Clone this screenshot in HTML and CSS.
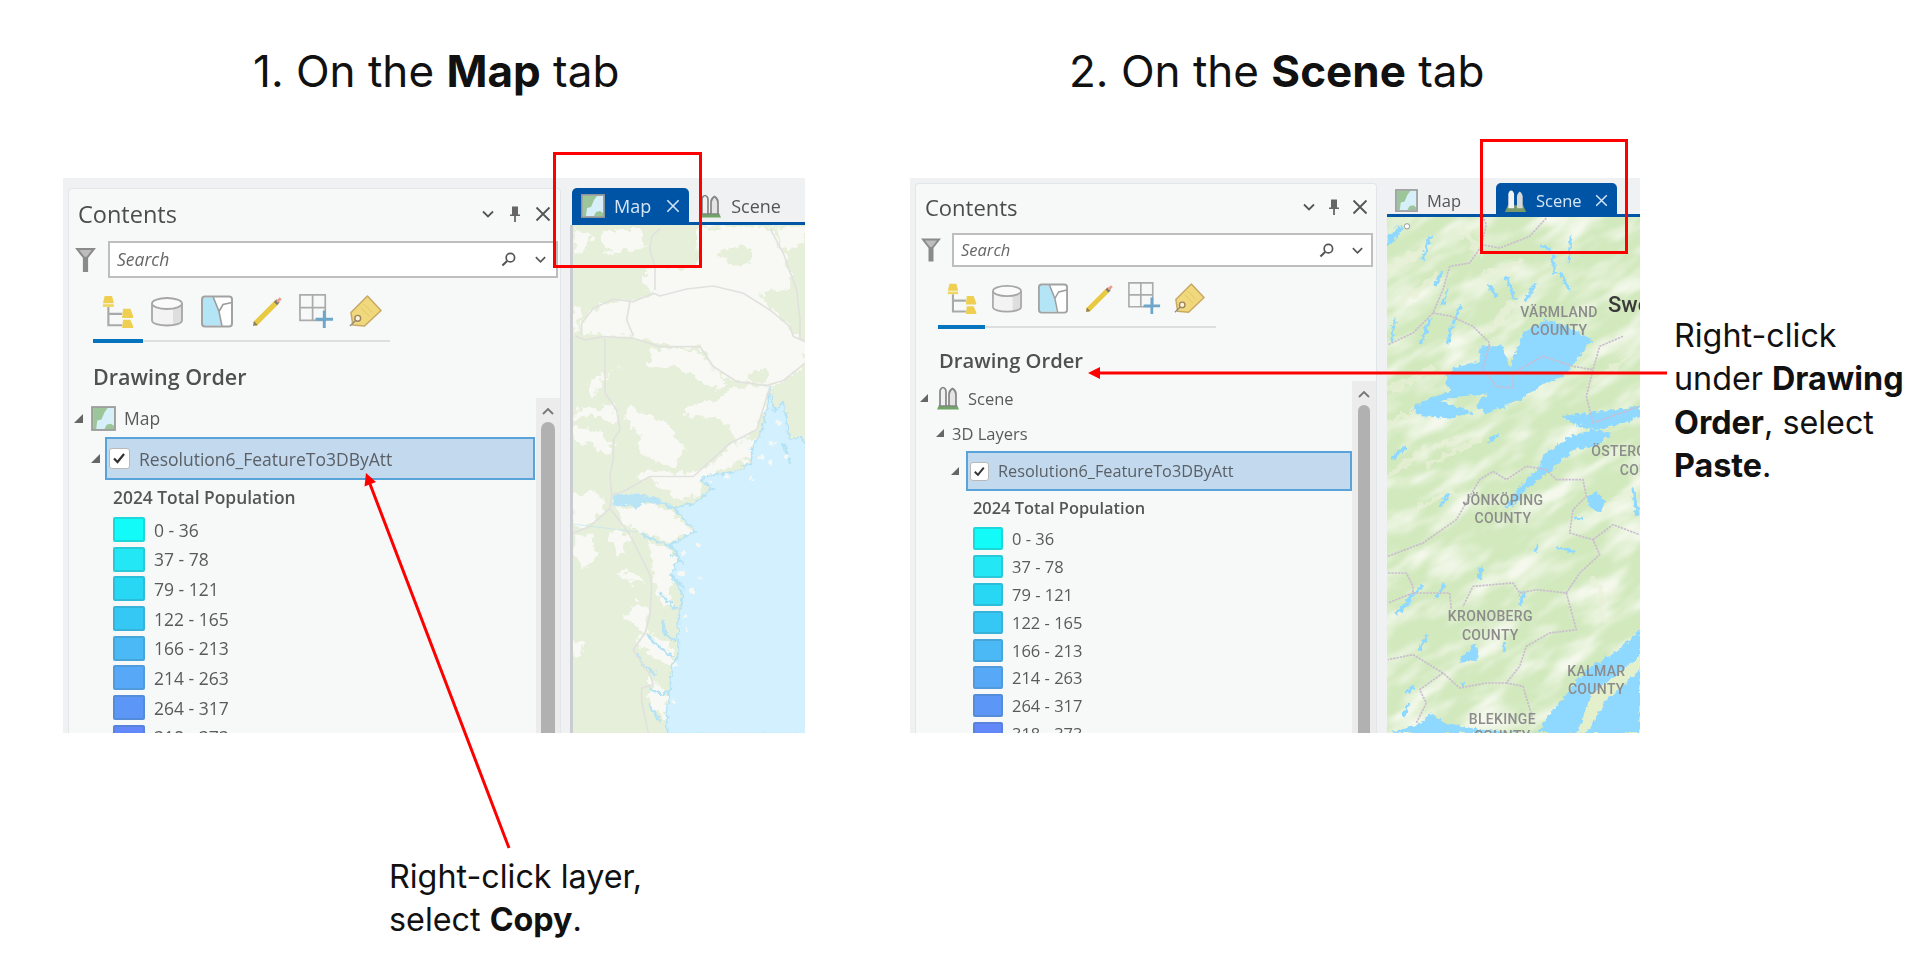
FILE: index.html
```html
<!DOCTYPE html>
<html lang="en">
<head>
<meta charset="utf-8">
<title>Copy a layer from a map to a scene</title>
<link rel="stylesheet" href="styles.css">
</head>
<body>
<svg class="sprite" aria-hidden="true">
  <defs>
    <filter id="rough" x="-5%" y="-5%" width="110%" height="110%">
      <feTurbulence type="fractalNoise" baseFrequency=".04" numOctaves="3" seed="4"/>
      <feDisplacementMap in="SourceGraphic" scale="42" xChannelSelector="R" yChannelSelector="G"/>
    </filter>
    <filter id="fine" x="-5%" y="-5%" width="110%" height="110%">
      <feTurbulence type="fractalNoise" baseFrequency=".07" numOctaves="3" seed="9"/>
      <feDisplacementMap in="SourceGraphic" scale="20" xChannelSelector="R" yChannelSelector="G"/>
    </filter>
    <filter id="mottle" x="0" y="0" width="100%" height="100%">
      <feTurbulence type="fractalNoise" baseFrequency=".006 .017" numOctaves="3" seed="7"/>
      <feColorMatrix type="matrix" values="0 0 0 0 .91  0 0 0 0 .945  0 0 0 0 .845  3 0 0 0 -1.300"/>
      <feGaussianBlur stdDeviation="3"/>
    </filter>
    <symbol id="i-chevron" viewBox="0 0 14 14"><path d="M2 4.500 7 9.500 12 4.500" fill="none" stroke="#555" stroke-width="1.800"/></symbol>
    <symbol id="i-pin" viewBox="0 0 14 18"><path d="M4 1.500h6v8h2v1.500H2V9.500h2z" fill="#666"/><path d="M7 11v6" stroke="#666" stroke-width="1.800"/></symbol>
    <symbol id="i-close" viewBox="0 0 16 16"><path d="M1.500 1.500 14.500 14.500M14.500 1.500 1.500 14.500" fill="none" stroke="currentColor" stroke-width="1.800"/></symbol>
    <symbol id="i-filter" viewBox="0 0 22 26"><path d="M1 1.500h20L13.500 11v13.500h-5V11z" fill="#8a8a8a"/><path d="M5 3.500h12L12 10h-2z" fill="#bdbdbd"/></symbol>
    <symbol id="i-search" viewBox="0 0 16 16"><circle cx="10" cy="6" r="4.500" fill="none" stroke="#555" stroke-width="1.800"/><path d="M6.500 9.500 1.500 14.500" stroke="#555" stroke-width="2.200"/></symbol>
    <symbol id="i-order" viewBox="0 0 35 36">
      <path d="M7 13v20h15M7 20.500h15" fill="none" stroke="#a9a9a9" stroke-width="2.400"/>
      <path d="M3 1h8l2 8H1z" fill="#efcf52"/><path d="M1 10h12v3H1z" fill="#efd662"/>
      <path d="M23 15h8l3 8v2H22z" fill="#efcf52"/><path d="M23 27h8l3 7v2H22z" fill="#efcf52"/>
    </symbol>
    <symbol id="i-source" viewBox="0 0 32 30">
      <path d="M1 7v17c0 3 7 5 15 5s15-2 15-5V7z" fill="#f3f3f3"/><path d="M22 11h9v13c0 2-4 4-9 4.500z" fill="#dedede"/>
      <path d="M1 7v17c0 3 7 5 15 5s15-2 15-5V7" fill="none" stroke="#a6a6a6" stroke-width="1.800"/>
      <ellipse cx="16" cy="7" rx="15" ry="5.500" fill="#fafafa" stroke="#a6a6a6" stroke-width="1.800"/>
    </symbol>
    <symbol id="i-selection" viewBox="0 0 32 32">
      <rect x="1" y="1" width="30" height="30" rx="3" fill="#fff"/>
      <path d="M2 2h10l5 12 3 16H2z" fill="#b3e5f7"/>
      <path d="M12 1l6 15 3 15M18 16l4-7 9-2" fill="none" stroke="#9c9c9c" stroke-width="1.600"/>
      <rect x="1" y="1" width="30" height="30" rx="3" fill="none" stroke="#a2a2a2" stroke-width="2"/>
    </symbol>
    <symbol id="i-pencil" viewBox="0 0 30 30">
      <path d="M2.500 27.500 24 6" stroke="#e8c942" stroke-width="5"/>
      <path d="M1 29 2 24.500 5.500 28z" fill="#8a7d5a"/>
      <path d="M22.500 4.500 25.500 7.500" stroke="#777" stroke-width="3.500"/>
      <path d="M25 3 27 5" stroke="#ee9e8e" stroke-width="5"/>
    </symbol>
    <symbol id="i-add" viewBox="0 0 36 36">
      <path d="M1 1h26v26H1zM14 1v26M1 14h26" fill="none" stroke="#ababab" stroke-width="1.800"/>
      <path d="M26 17v18M17 26h18" fill="none" stroke="#6ea6ca" stroke-width="3"/>
    </symbol>
    <symbol id="i-label" viewBox="0 0 34 34">
      <path d="M19 1 33 16 16 32 4 31 2 18z" fill="#f0d87c" stroke="#c9a864" stroke-width="1.600" stroke-linejoin="round"/>
      <path d="M15 9l9 9M12 13l9 9" stroke="#e2c566" stroke-width="1"/>
      <circle cx="9" cy="24" r="3" fill="#f9f3df" stroke="#a0825c" stroke-width="1.500"/>
      <path d="M7 26 1 32" stroke="#8d8d80" stroke-width="1.500"/>
    </symbol>
    <symbol id="i-map" viewBox="0 0 24 24">
      <rect x="1" y="1" width="22" height="22" fill="#d7eff8"/>
      <path d="M2 2h14l-3 4-3 7-4 1-1 8H2z" fill="#9cc59a"/>
      <path d="M13 22l2-4 4-1 3 2v3z" fill="#9cc59a"/>
      <rect x="1" y="1" width="22" height="22" fill="none" stroke="#9b9e9b" stroke-width="1.800"/>
    </symbol>
    <symbol id="i-scene" viewBox="0 0 24 24">
      <path d="M1 23.500 3 19h18l2 4.500z" fill="#6fa565"/>
      <path d="M4 20V5.500C4 3.500 5.500 1.500 7 1.500S10 3.500 10 5.500V20z" fill="#f0f0f0" stroke="#858585" stroke-width="1.700"/>
      <path d="M13 20V8C13 6 15 3.500 16.500 2.500 18 3.500 20 6 20 8V20z" fill="#e4e4e4" stroke="#858585" stroke-width="1.700"/>
    </symbol>
    <symbol id="i-scene-active" viewBox="0 0 24 24">
      <path d="M1 24 4 17h16l3 7z" fill="#7a9a6c"/>
      <path d="M4.500 20V5.500C4.500 3.500 6 1.500 7.500 1.500S10.500 3.500 10.500 5.500V20z" fill="#f4f4f4"/>
      <path d="M13.500 20V8C13.500 6 15 3.500 16.500 2.500 18 3.500 19.500 6 19.500 8V20z" fill="#d8d8d8"/>
    </symbol>
  </defs>
</svg>

<main class="slide">
  <h2 class="title title-map">1. On the <b>Map</b> tab</h2>
  <h2 class="title title-scene">2. On the <b>Scene</b> tab</h2>

  <section class="shot shot-map">
    <div class="panel">
      <header class="panel-head">
        <h3 class="panel-title">Contents</h3>
        <div class="panel-tools">
          <svg class="tool tool-chevron"><use href="#i-chevron"/></svg>
          <svg class="tool tool-pin"><use href="#i-pin"/></svg>
          <svg class="tool tool-close"><use href="#i-close"/></svg>
        </div>
      </header>
      <div class="search-row">
        <svg class="filter"><use href="#i-filter"/></svg>
        <div class="search">
          <span class="search-text">Search</span>
          <svg class="search-icon"><use href="#i-search"/></svg>
          <svg class="search-chevron"><use href="#i-chevron"/></svg>
        </div>
      </div>
      <div class="views">
        <svg class="view-icon vi-order"><use href="#i-order"/></svg>
        <svg class="view-icon vi-source"><use href="#i-source"/></svg>
        <svg class="view-icon vi-selection"><use href="#i-selection"/></svg>
        <svg class="view-icon vi-pencil"><use href="#i-pencil"/></svg>
        <svg class="view-icon vi-add"><use href="#i-add"/></svg>
        <svg class="view-icon vi-label"><use href="#i-label"/></svg>
      </div>
      <div class="views-rule"><span class="views-rule-on"></span></div>
      <h4 class="order-title">Drawing Order</h4>
      <div class="tree">
        <div class="tree-body">
          <div class="node node-root">
            <span class="twist"></span>
            <svg class="node-icon"><use href="#i-map"/></svg>
            <span>Map</span>
          </div>
          <div class="layer">
            <span class="twist"></span>
            <div class="layer-row">
              <span class="check"><svg viewBox="0 0 14 14"><path d="M2 7.500 5.500 11 12 3" fill="none" stroke="#333" stroke-width="2.200"/></svg></span>
              <span class="layer-name">Resolution6_FeatureTo3DByAtt</span>
            </div>
          </div>
          <div class="legend-title">2024 Total Population</div>
          <ul class="legend">
            <li><i class="swatch c1"></i>0 - 36</li>
            <li><i class="swatch c2"></i>37 - 78</li>
            <li><i class="swatch c3"></i>79 - 121</li>
            <li><i class="swatch c4"></i>122 - 165</li>
            <li><i class="swatch c5"></i>166 - 213</li>
            <li><i class="swatch c6"></i>214 - 263</li>
            <li><i class="swatch c7"></i>264 - 317</li>
            <li><i class="swatch c8"></i>318 - 373</li>
          </ul>
        </div>
        <div class="scroll">
          <svg class="scroll-up" viewBox="0 0 14 10"><path d="M2 8 7 3l5 5" fill="none" stroke="#777" stroke-width="1.800"/></svg>
          <div class="scroll-thumb"></div>
        </div>
      </div>
    </div>
    <div class="view">
      <div class="tabbar">
        <div class="tab tab-on">
          <svg class="tab-icon"><use href="#i-map"/></svg>
          <span>Map</span>
          <svg class="tab-close"><use href="#i-close"/></svg>
        </div>
        <div class="tab tab-off">
          <svg class="tab-icon"><use href="#i-scene"/></svg>
          <span>Scene</span>
        </div>
      </div>
      <div class="map">
        <svg class="map-art" viewBox="9 45 696 1525" preserveAspectRatio="none">
          <rect x="0" y="0" width="720" height="1600" fill="#e6efd9"/>
          <g fill="#f8f9f5" filter="url(#rough)">
            <polygon points="170,270 250,250 350,235 430,225 520,250 600,300 665,355 690,385 705,395 705,460 640,510 600,525 500,515 440,490 390,410 300,410 190,380 165,330"/>
            <polygon points="225,170 385,175 380,50 600,50 650,150 660,240 575,245 620,300 660,350 520,250 430,225 260,250 225,240"/>
            <polygon points="35,370 40,330 90,285 170,270 165,330 190,380 100,380"/>
            <polygon points="170,590 230,610 300,650 350,720 300,770 210,730 210,680 170,630"/>
            <polygon points="340,590 440,570 500,530 600,530 560,660 500,700 480,640 420,620 350,620"/>
            <polygon points="10,650 80,660 130,700 120,740 60,700 10,690"/>
            <polygon points="200,780 350,790 400,780 500,700 560,680 540,740 400,810 200,810"/>
            <polygon points="50,520 120,490 160,470 110,500 60,570"/>
            <polygon points="240,420 380,420 420,470 470,520 440,540 330,470 240,470"/>
            <polygon points="90,60 210,60 220,110 150,130 100,120"/>
            <polygon points="10,60 60,60 70,85 30,125 10,130"/>
            <polygon points="10,300 30,280 25,360 10,370"/>
            <polygon points="10,600 130,590 140,640 60,620 10,630"/>
            <polygon points="140,895 240,880 300,905 370,965 300,1000 220,965 160,945"/>
            <polygon points="10,855 80,845 110,885 60,945 10,955"/>
            <polygon points="10,975 60,975 80,1035 50,1075 10,1035"/>
            <polygon points="110,965 180,975 150,1045"/>
            <polygon points="140,1090 190,1080 220,1120 180,1120"/>
            <polygon points="165,1225 200,1170 235,1195 230,1265 200,1255"/>
            <polygon points="10,1290 50,1305 30,1335 10,1345"/>
            <polygon points="190,1285 230,1325 270,1355 310,1365 300,1300 240,1270"/>
            <polygon points="225,800 300,800 395,795 395,850 340,870 270,830"/>
            <polygon points="240,1000 300,1020 330,1100 290,1150 320,1190 270,1180 250,1100"/>
            <polygon points="240,1400 290,1450 290,1530 240,1500"/>
            <polygon points="640,120 705,100 705,50 620,50"/>
          </g>
          <g fill="#e6efd9" filter="url(#rough)">
            <polygon points="450,120 540,110 540,160 470,160"/>
            <polygon points="570,255 640,280 630,320 590,290"/>
            <polygon points="535,485 585,480 590,515 545,520"/>
            <polygon points="300,60 360,60 350,140 310,150"/>
            <polygon points="650,160 705,170 705,250 660,240"/>
          </g>
          <path filter="url(#fine)" fill="#d3f0fe" stroke="#b5e2f5" stroke-width="5" d="M600 530 590 600 575 660 545 715 545 760 480 790 400 800 395 815 430 835 370 880 310 895 375 965 300 1005 330 1045 300 1095 340 1155 330 1195 325 1235 325 1335 305 1365 300 1445 290 1495 290 1575H720V715L690 680 660 690 640 580 612 600Z"/>
          <g fill="#b9e4f6" filter="url(#fine)">
            <polygon points="130,855 200,850 260,865 320,895 330,910 270,880 210,885 200,900 180,885 130,890"/>
            <polygon points="205,965 250,985 300,1005 320,1025 270,1000 230,985"/>
          </g>
          <g fill="none" stroke="#b5e2f5" stroke-width="8" filter="url(#fine)">
            <path d="M265 1145 320 1200M280 1235 285 1275 320 1295M230 1275 270 1315 310 1340M200 1330 215 1365 260 1395M240 1435 270 1455 300 1445M235 1485 270 1535M300 1035 340 1060M305 1095 345 1140M640 700 660 760"/>
          </g>
          <g fill="#f6f8f4" filter="url(#fine)">
            <circle cx="315" cy="1045" r="9"/><circle cx="340" cy="1030" r="8"/><circle cx="335" cy="1090" r="10"/><circle cx="365" cy="1145" r="9"/><circle cx="385" cy="1005" r="6"/><circle cx="390" cy="1105" r="5"/><circle cx="310" cy="1475" r="5"/><circle cx="545" cy="805" r="7"/><circle cx="600" cy="755" r="6"/><circle cx="318" cy="1365" r="7"/><circle cx="625" cy="640" r="8"/><circle cx="605" cy="700" r="9"/><circle cx="650" cy="740" r="7"/><circle cx="575" cy="745" r="6"/><circle cx="470" cy="800" r="7"/><circle cx="420" cy="815" r="5"/><circle cx="345" cy="1220" r="4"/><circle cx="350" cy="1260" r="5"/>
          </g>
          <path fill="none" stroke="#bfe6f6" stroke-width="2" d="M10 943 205 967"/>
          <g fill="none" stroke="#e1e2df" stroke-width="5" stroke-linejoin="round">
            <path d="M600 55 640 130 680 240 690 330 690 385 705 395"/>
            <path d="M270 55 245 80 240 120 255 170 255 240"/>
            <path d="M35 375 35 340 70 295 130 268 190 275 250 250 270 258 350 237 430 228 520 250 600 300 660 350 670 380 705 395"/>
            <path d="M180 275 170 330 190 378"/>
            <path d="M15 378 45 390 100 380 190 385 270 410 390 410 430 470 500 515 590 527 640 512 705 460"/>
            <path d="M105 385 105 550 140 600 150 660 130 690 130 750 120 795 125 855 120 895 180 975 240 1095 245 1125 240 1215 225 1270 190 1320 240 1395 250 1425 215 1435 215 1475 235 1570"/>
            <path d="M120 895 60 950 10 970"/>
            <path d="M125 855 160 845 240 800 370 800 480 700 560 660 600 530"/>
          </g>
        </svg>
      </div>
    </div>
  </section>

  <section class="shot shot-scene">
    <div class="panel">
      <header class="panel-head">
        <h3 class="panel-title">Contents</h3>
        <div class="panel-tools">
          <svg class="tool tool-chevron"><use href="#i-chevron"/></svg>
          <svg class="tool tool-pin"><use href="#i-pin"/></svg>
          <svg class="tool tool-close"><use href="#i-close"/></svg>
        </div>
      </header>
      <div class="search-row">
        <svg class="filter"><use href="#i-filter"/></svg>
        <div class="search">
          <span class="search-text">Search</span>
          <svg class="search-icon"><use href="#i-search"/></svg>
          <svg class="search-chevron"><use href="#i-chevron"/></svg>
        </div>
      </div>
      <div class="views">
        <svg class="view-icon vi-order"><use href="#i-order"/></svg>
        <svg class="view-icon vi-source"><use href="#i-source"/></svg>
        <svg class="view-icon vi-selection"><use href="#i-selection"/></svg>
        <svg class="view-icon vi-pencil"><use href="#i-pencil"/></svg>
        <svg class="view-icon vi-add"><use href="#i-add"/></svg>
        <svg class="view-icon vi-label"><use href="#i-label"/></svg>
      </div>
      <div class="views-rule"><span class="views-rule-on"></span></div>
      <h4 class="order-title">Drawing Order</h4>
      <div class="tree">
        <div class="tree-body">
          <div class="node node-root">
            <span class="twist"></span>
            <svg class="node-icon"><use href="#i-scene"/></svg>
            <span>Scene</span>
          </div>
          <div class="node node-group">
            <span class="twist"></span>
            <span>3D Layers</span>
          </div>
          <div class="layer">
            <span class="twist"></span>
            <div class="layer-row">
              <span class="check"><svg viewBox="0 0 14 14"><path d="M2 7.500 5.500 11 12 3" fill="none" stroke="#333" stroke-width="2.200"/></svg></span>
              <span class="layer-name">Resolution6_FeatureTo3DByAtt</span>
            </div>
          </div>
          <div class="legend-title">2024 Total Population</div>
          <ul class="legend">
            <li><i class="swatch c1"></i>0 - 36</li>
            <li><i class="swatch c2"></i>37 - 78</li>
            <li><i class="swatch c3"></i>79 - 121</li>
            <li><i class="swatch c4"></i>122 - 165</li>
            <li><i class="swatch c5"></i>166 - 213</li>
            <li><i class="swatch c6"></i>214 - 263</li>
            <li><i class="swatch c7"></i>264 - 317</li>
            <li><i class="swatch c8"></i>318 - 373</li>
          </ul>
        </div>
        <div class="scroll">
          <svg class="scroll-up" viewBox="0 0 14 10"><path d="M2 8 7 3l5 5" fill="none" stroke="#777" stroke-width="1.800"/></svg>
          <div class="scroll-thumb"></div>
        </div>
      </div>
    </div>
    <div class="view">
      <div class="tabbar">
        <div class="tab tab-off">
          <svg class="tab-icon"><use href="#i-map"/></svg>
          <span>Map</span>
        </div>
        <div class="tab tab-on">
          <svg class="tab-icon"><use href="#i-scene-active"/></svg>
          <span>Scene</span>
          <svg class="tab-close"><use href="#i-close"/></svg>
        </div>
      </div>
      <div class="map">
        <svg class="map-art" viewBox="22 262 759 1548" preserveAspectRatio="none">
          <rect x="0" y="200" width="800" height="1650" fill="#d2e9be"/>
          <rect x="-500" y="-100" width="1900" height="2500" filter="url(#mottle)" transform="rotate(-32 400 1000)"/>
          <g fill="none" stroke="#e9f1d8" stroke-linecap="round" stroke-opacity=".7" filter="url(#rough)">
            <path stroke-width="26" d="M30 420 150 350M60 520 170 440M30 780 150 720M240 300 300 360M320 440 420 400M400 520 330 600"/>
            <path stroke-width="18" d="M150 1000 300 930M30 1040 130 960M220 1090 100 1140M170 950 250 920M30 880 120 840"/>
            <path stroke-width="14" d="M640 1340 680 1420M680 1480 650 1400M640 760 770 660M700 1110 760 1090"/>
          </g>
          <g fill="#8fd8ff" filter="url(#fine)">
            <polygon points="300,650 370,650 390,715 430,610 500,570 560,590 635,630 600,680 550,740 480,770 440,800 380,830 310,850 290,820 330,790 250,800 180,815 230,830 280,850 200,865 130,860 95,838 140,810 210,785 195,750 225,715 300,695"/>
            <polygon points="640,900 700,910 650,950 580,960 520,1020 450,1070 400,1130 375,1135 420,1070 470,1020 500,970 570,920"/>
            <polygon points="540,860 700,840 781,830 781,865 660,900 600,890"/>
            <polygon points="22,320 60,285 72,300 40,335 22,350"/>
            <polygon points="620,1100 650,1085 680,1115 660,1150 630,1130"/>
            <polygon points="240,1590 290,1540 295,1590 240,1600"/>
            <polygon points="50,1450 90,1420 110,1400 70,1445"/>
            <polygon points="30,1810 130,1780 150,1750 200,1780 300,1800 470,1810 520,1740 620,1620 720,1560 781,1500 781,1810"/>
          </g>
          <path fill="#e4efcc" d="M590 1810 640 1690 781 1580V1620L680 1710 620 1810Z" filter="url(#fine)"/>
          <g fill="none" stroke="#8fd8ff" stroke-linecap="round" stroke-width="9" filter="url(#fine)">
            <path d="M150 320 130 390M380 440 405 510M440 510 465 465M540 430 570 480M575 320 565 400M520 380 525 430M330 470 350 500M490 350 510 360M185 430 165 470M240 530 225 580M205 480 190 520M150 570 125 640M215 590 205 640M45 570 35 630"/>
            <path d="M185 1125 205 1095M330 935 355 915M40 985 75 955M590 1165 605 1167M475 1245 470 1265M535 1255 580 1265M305 1315 300 1345M195 1365 170 1400M130 1365 50 1450M140 1520 120 1560M375 1540 375 1560M250 1660 252 1662M100 1670 80 1690M85 1730 70 1760M430 1390 425 1420M760 1080 775 1160"/>
          </g>
          <g fill="none" stroke="#cabdcf" stroke-width="5" stroke-dasharray="7 3" stroke-linejoin="round">
            <path d="M500 265 450 320 360 355 305 345 320 285 310 262"/>
            <path d="M305 350 270 400 210 410 190 480 160 550 100 610 25 645"/>
            <path d="M160 550 215 560 280 590 330 640 310 720 350 770 400 775 400 730 490 680 580 710 640 720 620 800 640 880 780 830"/>
            <path d="M730 620 660 650 640 720"/>
            <path d="M25 1280 130 1240 230 1170 300 1050 340 1025 380 1050 440 1010 500 1020 530 1050 610 1050 620 1100 580 1140 570 1210 640 1230 660 1275 600 1330 560 1390 470 1380 420 1390 400 1360 280 1370 250 1430"/>
            <path d="M560 1390 590 1500 510 1510 440 1550 420 1610 380 1660 320 1660 240 1675 190 1630 100 1575 25 1590"/>
            <path d="M640 1230 700 1185 780 1215"/>
            <path d="M380 1660 430 1670 460 1770"/>
            <path d="M190 1630 120 1680 140 1720 110 1780"/>
            <path d="M25 1330 80 1330 100 1370 100 1390 25 1420M100 1390 210 1390 215 1440"/>
          </g>
          <circle cx="82" cy="290" r="8" fill="#fff" stroke="#999" stroke-width="3"/>
          <g class="map-labels">
            <text x="538" y="562">VÄRMLAND</text><text x="538" y="617">COUNTY</text>
            <text x="370" y="1125">JÖNKÖPING</text><text x="370" y="1180">COUNTY</text>
            <text x="332" y="1475">KRONOBERG</text><text x="332" y="1530">COUNTY</text>
            <text x="650" y="1638">KALMAR</text><text x="650" y="1693">COUNTY</text>
            <text x="368" y="1782">BLEKINGE</text><text x="368" y="1835">COUNTY</text>
            <text class="map-label-start" x="635" y="980">ÖSTERGÖTLAND</text><text class="map-label-start" x="720" y="1035">COUNTY</text>
          </g>
          <text class="map-country" x="685" y="548">Sweden</text>
        </svg>
      </div>
    </div>
  </section>

  <p class="note note-copy">Right-click layer,<br>select <b>Copy</b>.</p>
  <p class="note note-paste">Right-click<br>under <b>Drawing</b><br><b>Order</b>, select<br><b>Paste</b>.</p>

  <svg class="callouts" viewBox="0 0 1920 961" aria-hidden="true">
    <rect x="554.500" y="153.500" width="146" height="113" />
    <rect x="1481.500" y="140.500" width="145" height="112" />
    <path d="M509 848 370 484M1667 373H1098"/>
    <polygon points="366,473 376,482 364.500,486.500"/>
    <polygon points="1088,373 1100,367 1100,379"/>
  </svg>
</main>
</body>
</html>
```

FILE: styles.css
```css
* { box-sizing: border-box; }
html, body { margin: 0; padding: 0; background: #fff; }
body { font-family: Inter, "Liberation Sans", sans-serif; color: #111; }
.sprite { position: absolute; width: 0; height: 0; overflow: hidden; }

/* The slide is a free canvas: figures and captions sit where the author dropped them. */
.slide { position: relative; width: 1920px; height: 961px; overflow: hidden; background: #fff; }

.title { position: absolute; top: 44px; margin: 0; font-size: 44px; line-height: 54px; font-weight: 400; color: #111; white-space: nowrap; }
.title b { font-weight: 700; }
.title-map { left: 253px; }
.title-scene { left: 1069px; }

.note { position: absolute; margin: 0; font-size: 32.300px; line-height: 43.400px; color: #111; white-space: nowrap; }
.note b { font-weight: 700; }
.note-copy { left: 389px; top: 855px; }
.note-paste { left: 1674px; top: 314px; }

.callouts { position: absolute; inset: 0; width: 1920px; height: 961px; pointer-events: none; }
.callouts rect { fill: none; stroke: #f00; stroke-width: 3; }
.callouts path { fill: none; stroke: #f00; stroke-width: 3; }
.callouts polygon { fill: #f00; }

/* Screenshot component; each instance sets its own metrics */
.shot {
  position: absolute; display: flex; overflow: hidden; background: #eff1f3; color: #5a5a5a;
  font-family: "Open Sans", "Noto Sans", sans-serif; filter: blur(.55px);
}
.shot-map {
  left: 63px; top: 178px; width: 742px; height: 555px;
  --panel-x: 5px; --panel-y: 10px; --panel-w: 493px;
  --head-h: 52px; --head-pad: 2px; --title-fs: 23.500px; --text-fs: 17.500px; --name-fs: 17.500px; --bold-fs: 17.400px; --order-fs: 21.500px;
  --tool-right: 9px; --tool-gap: 13px;
  --search-h: 37px; --filter-x: 5px; --filter-w: 23px; --filter-h: 28px; --search-x: 11px; --search-r: 2px; --search-gap: 18px; --search-pad: 9px;
  --views-x: 32px; --view-gap: 16px; --views-top: 16px; --views-h: 35px; --rule-x: 24px; --rule-w: 297px; --rule-on: 50px; --rule-gap: 11px;
  --order-x: 24px; --order-h: 56px; --order-pad: 12px;
  --scroll-w: 24px; --thumb-w: 14px; --tree-top: 7px;
  --root-h: 26px; --root-x: 5px; --twist: 9px; --root-gap: 8px; --icon: 25px;
  --layer-gap: 6px; --layer-x: 22px; --row-w: 430px; --row-h: 43px; --row-ml: 5px; --check: 21px; --name-gap: 9px;
  --legend-title-x: 44px; --legend-title-h: 34px; --legend-top: 3px; --swatch-w: 32px; --swatch-h: 25px; --pitch: 29.700px; --swatch-gap: 9px;
  --tabbar-h: 47px; --tabbar-x: 11px; --tab-h: 34px; --tab-icon: 24px; --tab-fs: 18px; --close: 14px; --close-ml: 6px; --map-x: 9px; --map-edge: 3px;
}
.shot-scene {
  left: 910px; top: 178px; width: 730px; height: 555px;
  --panel-x: 5px; --panel-y: 5px; --panel-w: 462px;
  --head-h: 49px; --head-pad: 4px; --title-fs: 22px; --text-fs: 16.500px; --name-fs: 16.300px; --bold-fs: 16.400px; --order-fs: 20.200px;
  --tool-right: 8px; --tool-gap: 11px;
  --search-h: 34px; --filter-x: 4px; --filter-w: 22px; --filter-h: 26px; --search-x: 10px; --search-r: 3px; --search-gap: 17px; --search-pad: 7px;
  --views-x: 30px; --view-gap: 14px; --views-top: 15px; --views-h: 33px; --rule-x: 22px; --rule-w: 278px; --rule-on: 47px; --rule-gap: 11px;
  --order-x: 23px; --order-h: 53px; --order-pad: 10px;
  --scroll-w: 24px; --thumb-w: 12px; --tree-top: 5px;
  --root-h: 24px; --root-x: 4px; --twist: 8px; --root-gap: 8px; --icon: 24px;
  --layer-gap: 0px; --layer-x: 35px; --row-w: 386px; --row-h: 40px; --row-ml: 7px; --check: 19px; --name-gap: 9px;
  --legend-title-x: 57px; --legend-title-h: 33px; --legend-top: 3px; --swatch-w: 30px; --swatch-h: 23px; --pitch: 27.900px; --swatch-gap: 9px;
  --tabbar-h: 39px; --tabbar-x: 10px; --tab-h: 31px; --tab-icon: 23px; --tab-fs: 16.500px; --close: 13px; --close-ml: 4px; --map-x: 10px; --map-edge: 0px;
}

.panel {
  flex: none; display: flex; flex-direction: column; width: var(--panel-w);
  margin: var(--panel-y) 0 0 var(--panel-x); background: #f7f9f9;
  border: 1px solid #e3e6e8; border-bottom: 0; border-radius: 4px 4px 0 0;
}
.panel-head { display: flex; align-items: center; justify-content: space-between; height: var(--head-h); padding: 0 var(--tool-right) var(--head-pad) 9px; flex: none; }
.panel-title { margin: 0; font-size: var(--title-fs); font-weight: 400; color: #4c4c4c; }
.panel-tools { display: flex; align-items: center; gap: var(--tool-gap); }
.tool { display: block; width: 14px; height: 14px; color: #555; }
.tool-pin { height: 18px; }
.tool-close { width: 16px; height: 16px; }

.search-row { display: flex; align-items: center; height: var(--search-h); padding-left: var(--filter-x); padding-right: var(--search-r); flex: none; }
.filter { width: var(--filter-w); height: var(--filter-h); flex: none; }
.search {
  flex: 1; display: flex; align-items: center; height: 100%; margin-left: var(--search-x);
  background: #fff; border: 2px solid #bebebe; padding: 0 var(--search-pad) 0 7px; gap: var(--search-gap);
}
.search-text { flex: 1; font-size: var(--text-fs); line-height: 1; font-style: italic; color: #666; }
.search-icon { width: 15px; height: 15px; }
.search-chevron { width: 13px; height: 13px; }

.views { display: flex; align-items: center; gap: var(--view-gap); height: var(--views-h); margin-top: var(--views-top); padding-left: var(--views-x); flex: none; }
.view-icon { display: block; flex: none; height: calc(var(--views-h) - 2px); }
.vi-order { width: calc(var(--views-h) - 1px); }
.vi-source, .vi-selection { width: calc(var(--views-h) - 3px); }
.vi-selection { margin-left: 2px; }
.vi-pencil { width: calc(var(--views-h) - 4px); margin-left: 3px; }
.vi-add { width: var(--views-h); height: var(--views-h); }
.vi-label { width: calc(var(--views-h) - 2px); margin-left: -1px; }

.views-rule { position: relative; height: 2px; width: var(--rule-w); margin: var(--rule-gap) 0 0 var(--rule-x); background: #dcdee0; flex: none; }
.views-rule-on { display: block; width: var(--rule-on); height: 4px; position: absolute; left: 0; top: -1px; background: #0673bd; }

.order-title { display: flex; align-items: center; height: var(--order-h); margin: 0; padding: var(--order-pad) 0 0 var(--order-x); font-size: var(--order-fs); font-weight: 600; color: #505050; flex: none; }

.tree { flex: 1; display: flex; min-height: 0; }
.tree-body { flex: 1; min-width: 0; padding-top: var(--tree-top); font-size: var(--text-fs); overflow: hidden; }
.twist { display: block; flex: none; width: 0; height: 0; border-style: solid; border-width: 0 0 var(--twist) var(--twist); border-color: transparent transparent #666 transparent; }
.node { display: flex; align-items: center; }
.node-root { height: var(--root-h); padding-left: var(--root-x); gap: var(--root-gap); }
.node-icon { width: var(--icon); height: var(--icon); flex: none; }
.node-group { height: 41px; padding: 5px 0 0 20px; gap: 8px; font-weight: 500; }

.layer { display: flex; align-items: center; margin-top: var(--layer-gap); padding-left: var(--layer-x); }
.layer .twist { margin-right: var(--row-ml); }
.layer-row { flex: none; display: flex; align-items: center; width: var(--row-w); height: var(--row-h); background: #c2d9ee; border: 2px solid #58a4da; padding-left: 2px; font-size: var(--name-fs); }
.check { display: flex; align-items: center; justify-content: center; width: var(--check); height: var(--check); background: #fff; border: 1px solid #b9b9b9; border-radius: 3px; flex: none; }
.check svg { width: 74%; height: 74%; }
.layer-name { margin-left: var(--name-gap); white-space: nowrap; color: #5a6066; }

.legend-title { display: flex; align-items: center; height: var(--legend-title-h); padding-left: var(--legend-title-x); font-size: var(--bold-fs); font-weight: 600; color: #555; }
.legend { list-style: none; margin: var(--legend-top) 0 0; padding: 0 0 0 var(--legend-title-x); }
.legend li { display: flex; align-items: center; height: var(--pitch); gap: var(--swatch-gap); padding-bottom: calc(var(--pitch) - var(--swatch-h)); white-space: nowrap; }
.swatch { display: block; flex: none; width: var(--swatch-w); height: var(--swatch-h); border: 2px solid rgba(60, 110, 130, .25); border-radius: 2px; }
.c1 { background: #12fbf8; } .c2 { background: #23e7f5; } .c3 { background: #27d7f4; } .c4 { background: #36c8f5; }
.c5 { background: #4bb9f6; } .c6 { background: #58a8f8; } .c7 { background: #5c96f7; } .c8 { background: #6288fa; }

.scroll { flex: none; display: flex; flex-direction: column; align-items: center; width: var(--scroll-w); background: #ececec; }
.scroll-up { width: 14px; height: 10px; margin: 8px 0 6px; flex: none; }
.scroll-thumb { flex: 1; width: var(--thumb-w); background: #b1b1b1; border-radius: 7px 7px 0 0; }

.view { flex: 1; min-width: 0; display: flex; flex-direction: column; }
.tabbar { flex: none; display: flex; align-items: flex-end; height: var(--tabbar-h); margin-left: var(--tabbar-x); border-bottom: 3px solid #0054a6; font-size: var(--tab-fs); }
.tab { display: flex; align-items: center; height: var(--tab-h); gap: 9px; padding: 1px 9px 0; white-space: nowrap; }
.tab-on { background: #0054a6; color: #d5e6f6; border-radius: 5px 5px 0 0; }
.tab-off { color: #555; }
.tab-icon { width: var(--tab-icon); height: var(--tab-icon); flex: none; }
.tab-close { width: var(--close); height: var(--close); margin-left: var(--close-ml); color: #d5e6f6; flex: none; }
.shot-scene .tab { padding-top: 3px; }
.shot-scene .tab-off { width: 109px; padding-left: 8px; }
.shot-scene .tab-on { padding-left: 8px; padding-right: 9px; }

.map { flex: 1; min-height: 0; margin-left: var(--map-x); border-left: var(--map-edge) solid #c9ccd0; overflow: hidden; }
.map-art { display: block; width: 100%; height: 100%; }
.map-labels text { font-family: Roboto, sans-serif; font-size: 42px; font-weight: 500; fill: #8c8c8c; text-anchor: middle; letter-spacing: 1px; }
.map-labels .map-label-start { text-anchor: start; }
.map-country { font-family: Roboto, sans-serif; font-size: 66px; font-weight: 500; fill: #3a3a3a; }
```
